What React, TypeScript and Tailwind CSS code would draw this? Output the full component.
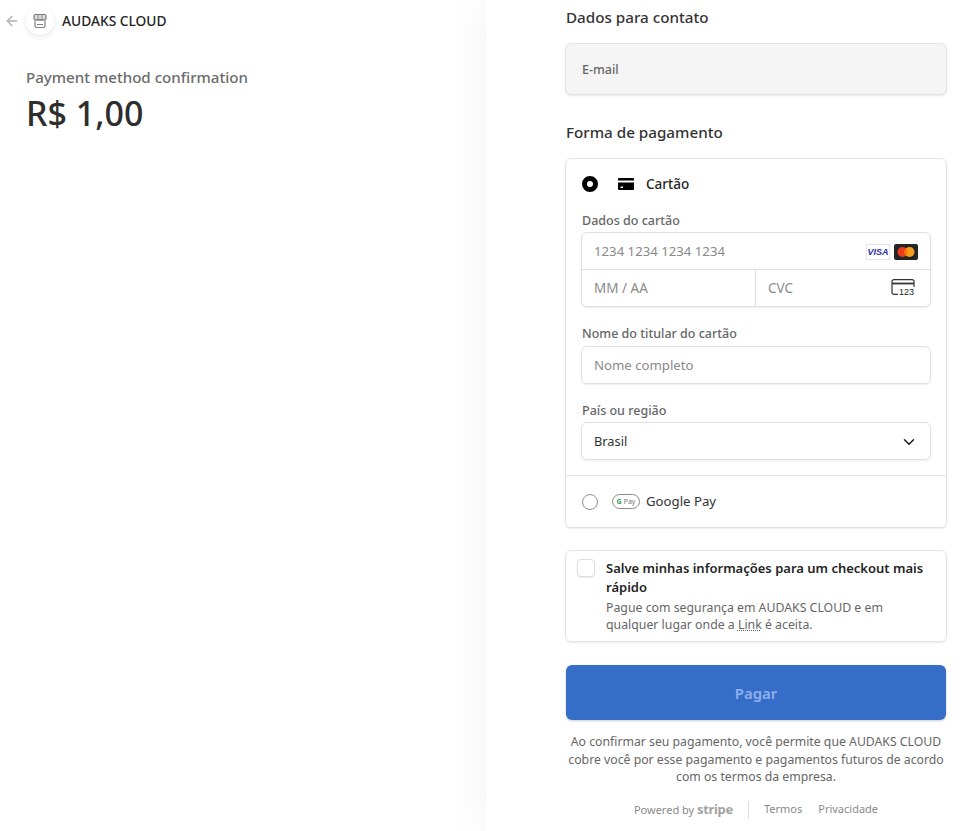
import { ArrowLeft, ChevronDown } from "lucide-react";

const field = "h-[37px] flex items-center px-3 text-[13.2px]";
const label = "block pl-[1px] text-[12.500px] font-medium leading-[20px] text-[#666]";

function StoreIcon() {
  return (
    <svg width="16" height="16" viewBox="0 0 16 16" fill="none" stroke="#7d7d7d" strokeWidth="1.2">
      <path d="M3.500 1.500h9a1.500 1.500 0 0 1 1.500 1.500v2.700a1.800 1.800 0 0 1-3 .8 2 2 0 0 1-3 0 2 2 0 0 1-3 0 1.800 1.800 0 0 1-3-.8V3a1.500 1.500 0 0 1 1.500-1.500z" fill="#dcdcdc" />
      <path d="M3 7.500V13a1.500 1.500 0 0 0 1.500 1.500h7A1.500 1.500 0 0 0 13 13V7.500M5 11.500h6" />
      <path d="M6 1.500v4.500M10 1.500v4.500" strokeWidth="0.8" />
    </svg>
  );
}

function CardIcon() {
  return (
    <svg width="16" height="12" viewBox="0 0 16 12" fill="#000">
      <path d="M1 0h14a1 1 0 0 1 1 1v1.500H0V1a1 1 0 0 1 1-1z" />
      <path d="M0 4.500h16V11a1 1 0 0 1-1 1H1a1 1 0 0 1-1-1z" />
      <rect x="2.500" y="8.500" width="2.500" height="1.500" fill="#fff" />
    </svg>
  );
}

function VisaBadge() {
  return (
    <div className="w-[24px] h-[16px] border border-[#e3e3e8] bg-white flex items-center justify-center text-[9px] font-bold italic text-[#2b2f9f] leading-none font-['Liberation_Sans',sans-serif]">
      VISA
    </div>
  );
}

function MastercardBadge() {
  return (
    <svg width="24" height="16" viewBox="0 0 24 16">
      <rect width="24" height="16" rx="2" fill="#252525" />
      <circle cx="8.500" cy="8" r="5" fill="#eb3b1b" />
      <circle cx="15.500" cy="8" r="5" fill="#f79e1b" />
      <path d="M12 4.400a5 5 0 0 1 0 7.200 5 5 0 0 1 0-7.200z" fill="#ff7a00" />
    </svg>
  );
}

function CvcIcon() {
  return (
    <div className="relative w-[24px] h-[18px]">
      <svg width="24" height="16" viewBox="0 0 24 16" fill="none" stroke="#333" strokeWidth="1.200">
        <path d="M7 15.400H3a2 2 0 0 1-2-2V2.600a2 2 0 0 1 2-2h18a2 2 0 0 1 2 2V10" />
        <path d="M1 4.500h22" strokeWidth="1.800" />
      </svg>
      <span className="absolute right-0 bottom-0 text-[9px] leading-[10px] text-[#1a1a1a] font-['Liberation_Sans',sans-serif] bg-white px-[1px]">
        123
      </span>
    </div>
  );
}

function GooglePayBadge() {
  return (
    <div className="w-[28px] h-[15px] rounded-full border border-[#8a8a8a] flex items-center justify-center gap-[2px] text-[7px] leading-none text-[#777]">
      <span className="font-bold text-[#3b9a5b]">G</span>
      <span>Pay</span>
    </div>
  );
}

export default function App() {
  return (
    <div className="h-[831px] overflow-hidden flex bg-white font-['Noto_Sans','Open_Sans',sans-serif] text-[#1a1a1a]">
      <div className="w-[486px] shrink-0 pl-[4px] pt-[6px]">
        <div className="flex items-center h-[30px]">
          <ArrowLeft size={16} className="text-[#b0b0b0]" strokeWidth={2} />
          <div className="ml-[6px] w-[28px] h-[28px] rounded-full bg-white shadow-[0_2px_5px_rgba(50,50,93,0.12)] flex items-center justify-center">
            <StoreIcon />
          </div>
          <span className="ml-[8px] text-[13.750px] font-medium text-[#242424]">AUDAKS CLOUD</span>
        </div>
        <div className="pl-[22px] mt-[29px] text-[15.100px] font-medium leading-[24px] text-[#6b6b6b]">
          Payment method confirmation
        </div>
        <div className="pl-[22px] mt-[2px] text-[34px] font-medium leading-[44px] text-[#2e2e2e]">R$ 1,00</div>
      </div>

      <div className="flex-1 pl-[79px] pr-[16px] shadow-[-12px_0_30px_rgba(0,0,0,0.03)]">
        <h2 className="mt-[5px] pl-[1px] text-[15.200px] font-medium leading-[24px] text-[#333]">Dados para contato</h2>
        <div className="mt-[14px] h-[52px] rounded-md border border-[#e4e4e4] bg-[#f5f5f5] shadow-[0_1px_2px_rgba(0,0,0,0.1)] flex items-center px-4 pt-[2px] text-[12.500px] font-medium text-[#666]">
          E-mail
        </div>

        <h2 className="mt-[25px] pl-[1px] text-[15.200px] font-medium leading-[24px] text-[#333]">Forma de pagamento</h2>
        <div className="mt-[14px] h-[370px] rounded-md border border-[#e2e2e2] shadow-[0_1px_2px_rgba(0,0,0,0.08)] flex flex-col">
          <div className="h-[50px] shrink-0 flex items-center pl-4">
            <div className="w-4 h-4 rounded-full border-[5px] border-black" />
            <div className="ml-[20px]"><CardIcon /></div>
            <span className="ml-[12px] text-[13.500px] font-medium text-[#242424]">Cartão</span>
          </div>

          <div className="px-[15px] flex-1">
            <label className={`${label} mt-[2px]`}>Dados do cartão</label>
            <div className="mt-[1px] rounded-md border border-[#e0e0e0] shadow-[0_1px_2px_rgba(0,0,0,0.08)]">
              <div className={`${field} pt-[2px] border-b border-[#e0e0e0] justify-between pr-[12px]`}>
                <span className="text-[#8a8a8a]">1234 1234 1234 1234</span>
                <div className="flex items-center gap-[4px]">
                  <VisaBadge />
                  <MastercardBadge />
                </div>
              </div>
              <div className="flex h-[36px]">
                <div className="w-[174px] border-r border-[#e0e0e0] flex items-center px-3 text-[13.500px] text-[#8a8a8a]">MM / AA</div>
                <div className="flex-1 flex items-center justify-between pl-3 pr-[15px] text-[13.500px] text-[#8a8a8a]">
                  <span>CVC</span>
                  <CvcIcon />
                </div>
              </div>
            </div>

            <label className={`${label} mt-[17px]`}>Nome do titular do cartão</label>
            <div className={`${field} pt-[2px] mt-[2px] rounded-md border border-[#e0e0e0] shadow-[0_1px_2px_rgba(0,0,0,0.08)] h-[38px] text-[#8a8a8a]`}>
              Nome completo
            </div>

            <label className={`${label} mt-[17px]`}>País ou região</label>
            <div className={`${field} pt-[2px] mt-[1px] rounded-md border border-[#e0e0e0] shadow-[0_1px_2px_rgba(0,0,0,0.08)] h-[38px] justify-between text-[#333]`}>
              <span className="text-[12.800px]">Brasil</span>
              <ChevronDown size={18} strokeWidth={2} className="text-[#1a1a1a]" />
            </div>
          </div>

          <div className="h-[52px] shrink-0 border-t border-[#e6e6e6] flex items-center pl-4">
            <div className="w-4 h-4 rounded-full border border-[#8f8f8f]" />
            <div className="ml-[14px]"><GooglePayBadge /></div>
            <span className="ml-[6px] text-[13.200px] text-[#333]">Google Pay</span>
          </div>
        </div>

        <div className="mt-[22px] h-[92px] rounded-md border border-[#e2e2e2] shadow-[0_1px_2px_rgba(0,0,0,0.08)] flex pl-[11px] pr-4 pt-[8px]">
          <div className="w-[18px] h-[18px] shrink-0 rounded-[4px] border border-[#dcdcdc] shadow-[0_1px_1px_rgba(0,0,0,0.08)]" />
          <div className="ml-[11px]">
            <div className="text-[13px] font-semibold leading-[19px] text-[#242424]">
              Salve minhas informações para um checkout mais rápido
            </div>
            <div className="mt-[2px] text-[12.300px] leading-[17px] text-[#666]">
              Pague com segurança em AUDAKS CLOUD e em qualquer lugar onde a{" "}
              <span className="underline decoration-dotted">Link</span> é aceita.
            </div>
          </div>
        </div>

        <div className="px-[1px]">
          <button className="mt-[23px] w-full h-[55px] pt-[2px] rounded-md bg-[#366dc9] shadow-[0_1px_3px_rgba(0,0,0,0.2)] text-[15px] font-semibold text-[#8fb0ea]">
            Pagar
          </button>
        </div>

        <p className="mt-[13px] text-center text-[12.250px] leading-[17.500px] text-[#666]">
          Ao confirmar seu pagamento, você permite que AUDAKS CLOUD cobre você por esse pagamento e pagamentos futuros de acordo com os termos da empresa.
        </p>

        <div className="mt-[15px] flex justify-center items-center text-[11px] text-[#8a8a8a] h-[18px]">
          <span>Powered by <b className="text-[#a3a3a3] text-[13px] font-bold tracking-tight">stripe</b></span>
          <div className="mx-[15px] w-px h-[18px] bg-[#dcdcdc]" />
          <span>Termos</span>
          <span className="ml-[16px]">Privacidade</span>
        </div>
      </div>
    </div>
  );
}
